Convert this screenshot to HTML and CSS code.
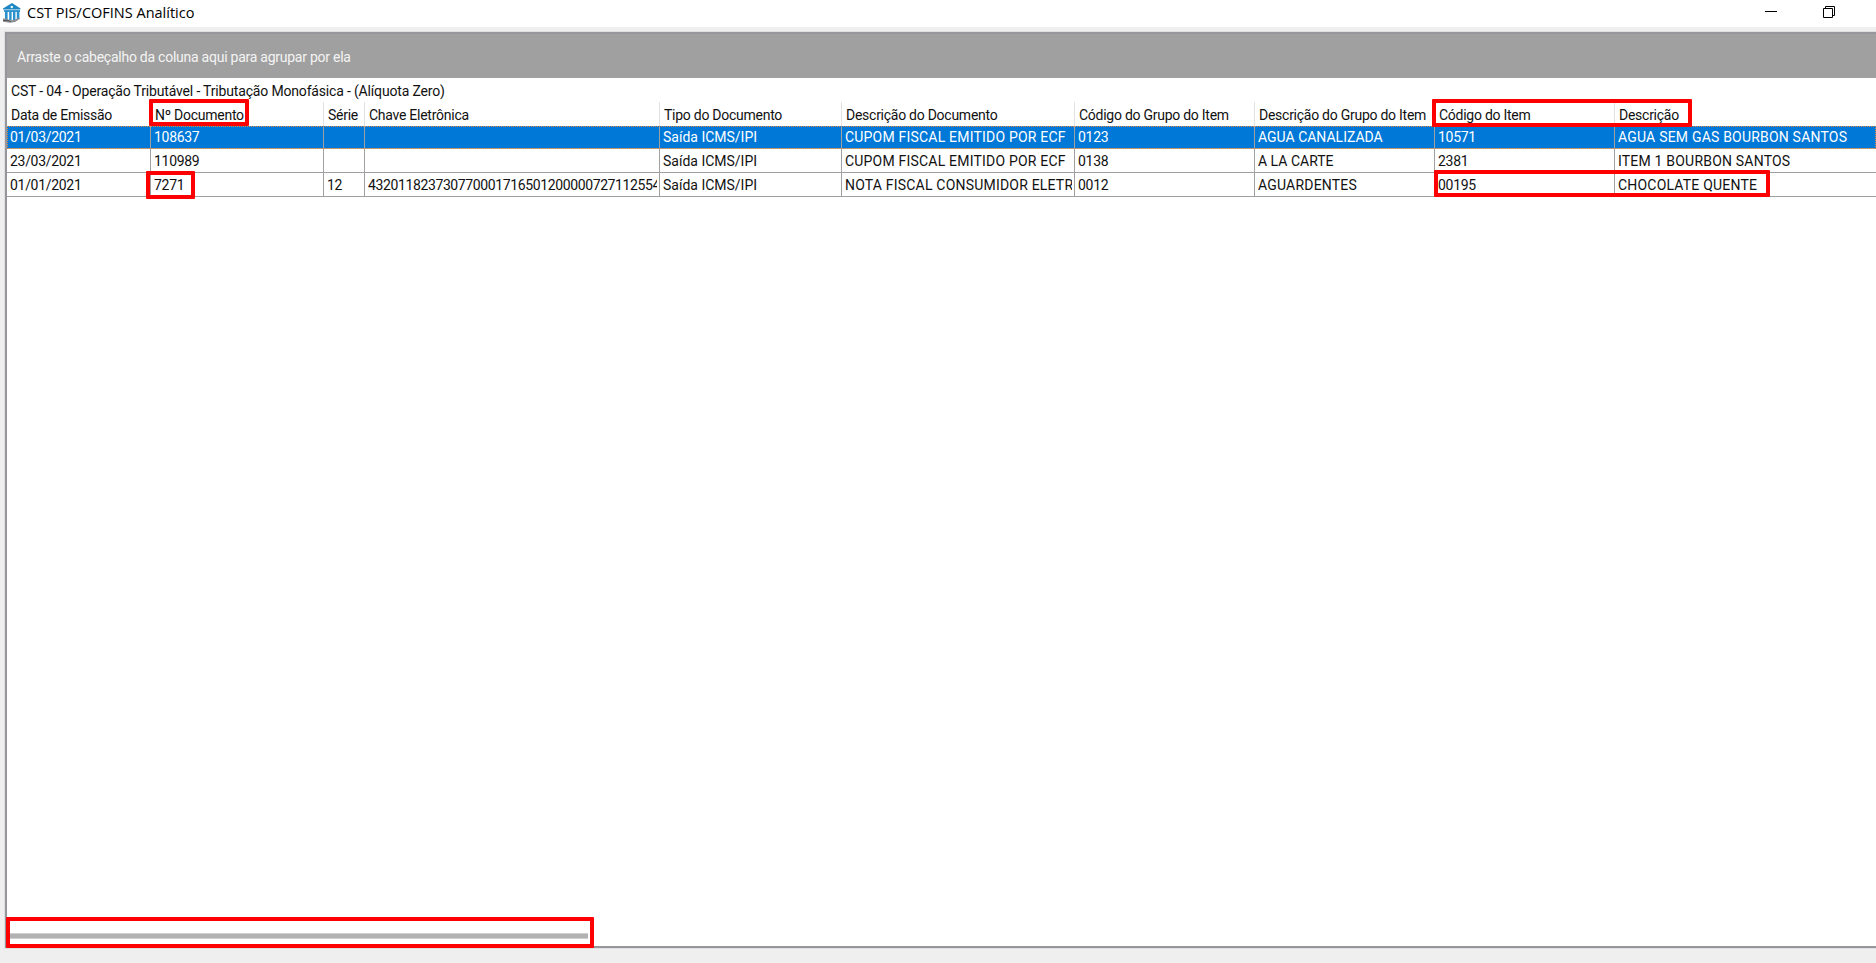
FILE: index.html
```html
<!DOCTYPE html>
<html lang="pt-BR">
<head>
  <meta charset="UTF-8">
  <title>CST PIS/COFINS Analítico</title>
  <link rel="stylesheet" href="styles.css">
</head>
<body>

  <div class="titlebar">
    <svg class="logo" width="20" height="22" viewBox="0 0 20 22">
      <path d="M1 6.5 10 1l8.5 5.5v1H1z" fill="#1c86c2"/>
      <path d="M2 8h16v2H2z" fill="#3d9bd0"/>
      <path d="M3 9h2.6v9H3zM7.2 9h2.4v9H7.2zM11 9h2.4v9H11zM14.8 9h2.6v8h-2.6z" fill="#2a91cc"/>
      <circle cx="9.8" cy="5" r="1.3" fill="#e8f4fa"/>
      <path d="M1 16.5l4 .3 3 1.5 4-.2 5-2.3 1 1-5 3.2-5 .8-7-1z" fill="#8b8d90"/>
      <path d="M1 18.5h5l3 1" fill="none" stroke="#55585c"/>
    </svg>
    <span class="caption">CST PIS/COFINS Analítico</span>
    <div class="controls">
      <svg width="12" height="12" viewBox="0 0 12 12"><path d="M0 5.5h12" stroke="#000"/></svg>
      <svg width="12" height="12" viewBox="0 0 12 12" fill="none" stroke="#000"><path d="M.5 2.5h9v9h-9zM2.5 2.5v-2h9v9h-2"/></svg>
    </div>
  </div>

  <div class="panel">
    <div class="groupbar">Arraste o cabeçalho da coluna aqui para agrupar por ela</div>
    <div class="band"><span>CST - 04 - Operação Tributável - Tributação Monofásica - (Alíquota Zero)</span></div>

    <div class="row head">
      <div>Data de Emissão</div>
      <div>Nº Documento</div>
      <div>Série</div>
      <div>Chave Eletrônica</div>
      <div>Tipo do Documento</div>
      <div>Descrição do Documento</div>
      <div>Código do Grupo do Item</div>
      <div>Descrição do Grupo do Item</div>
      <div>Código do Item</div>
      <div>Descrição</div>
    </div>
    <div class="row selected">
      <div class="num">01/03/2021</div>
      <div class="num">108637</div>
      <div></div>
      <div></div>
      <div class="kind">Saída ICMS/IPI</div>
      <div>CUPOM FISCAL EMITIDO POR ECF</div>
      <div class="num">0123</div>
      <div class="group">AGUA CANALIZADA</div>
      <div class="num">10571</div>
      <div>AGUA SEM GAS BOURBON SANTOS</div>
    </div>
    <div class="row">
      <div class="num">23/03/2021</div>
      <div class="num">110989</div>
      <div></div>
      <div></div>
      <div class="kind">Saída ICMS/IPI</div>
      <div>CUPOM FISCAL EMITIDO POR ECF</div>
      <div class="num">0138</div>
      <div class="group">A LA CARTE</div>
      <div class="num">2381</div>
      <div>ITEM 1 BOURBON SANTOS</div>
    </div>
    <div class="row">
      <div class="num">01/01/2021</div>
      <div class="num">7271</div>
      <div class="num">12</div>
      <div class="num key">432011823730770001716501200000727112554</div>
      <div class="kind">Saída ICMS/IPI</div>
      <div>NOTA FISCAL CONSUMIDOR ELETR</div>
      <div class="num">0012</div>
      <div>AGUARDENTES</div>
      <div class="num">00195</div>
      <div>CHOCOLATE QUENTE</div>
    </div>

    <div class="scroll"><div class="thumb"></div></div>
  </div>

  <!-- marcações -->
  <div class="mark mark-doc"></div>
  <div class="mark mark-num"></div>
  <div class="mark mark-item"></div>
  <div class="mark mark-value"></div>
  <div class="mark mark-scroll"></div>

</body>
</html>
```

FILE: styles.css
```css
* { box-sizing: border-box; }

body {
  margin: 0;
  height: 963px;
  overflow: hidden;
  background: #efefef;
  font-family: Roboto, "Liberation Sans", sans-serif;
  font-size: 14px;
  color: #111;
  display: flex;
  flex-direction: column;
}

.titlebar {
  height: 27px;
  flex: none;
  display: flex;
  background: #fff;
}

.logo {
  margin: 2px 5px 0 2px;
}

.caption {
  font-family: "Open Sans", "Noto Sans", sans-serif;
  font-size: 14.5px;
  line-height: 26px;
  color: #000;
}

.controls {
  margin: 6px 41px 0 auto;
  display: flex;
  gap: 46px;
}

.panel {
  height: 916px;
  flex: none;
  margin: 5px 0 0 5px;
  border: solid #95979c;
  border-width: 2px 0 2px 2px;
  background: #fff;
  display: flex;
  flex-direction: column;
  box-shadow: 0 0 0 1px #dfdfe1;
}

.groupbar {
  height: 44px;
  padding-left: 10px;
  background: #a0a0a0;
  color: #f4f4f4;
  line-height: 47px;
  letter-spacing: -.25px;
}

.band {
  height: 24px;
  padding-left: 4px;
  line-height: 27px;
  letter-spacing: -.17px;
  white-space: nowrap;
}

.row {
  height: 24px;
  display: grid;
  grid-template-columns: 144px 173px 41px 295px 182px 233px 180px 180px 180px 1fr;
  border-bottom: 1px solid #a0a0a0;
}

.row > div {
  padding: 0 2px 0 3px;
  border-right: 1px solid #a0a0a0;
  line-height: 24px;
  letter-spacing: .2px;
  white-space: nowrap;
  overflow: clip;
  overflow-clip-margin: content-box;
}

.row > div:last-child {
  border-right: 0;
}

.head {
  border-bottom: 0;
}

.row.head > div {
  padding-left: 4px;
  border-color: #e2e2e2;
  line-height: 26px;
  letter-spacing: -.26px;
}

.selected {
  height: 23px;
  background: #0078d7;
  color: #fff;
  outline: 1px dotted #d88a45;
  outline-offset: -1px;
}

.row.selected > div {
  line-height: 22px;
}

.row > .num {
  letter-spacing: -.3px;
}

.row > .key {
  letter-spacing: -.38px;
}

.row > .kind {
  letter-spacing: 0;
}

.row > .group {
  letter-spacing: 0;
}

.scroll {
  margin: auto 0 7px 2px;
}

.thumb {
  width: 579px;
  height: 6px;
  background: #b2b2b2;
  border: solid #d0d0d0;
  border-width: 1px 0;
}

.mark {
  position: absolute;
  border: 4px solid #fe0000;
  border-radius: 1px;
}

.mark-doc { left: 149px; top: 99px; width: 100px; height: 27px; }
.mark-num { left: 146px; top: 171px; width: 49px; height: 28px; }
.mark-item { left: 1432px; top: 99px; width: 260px; height: 28px; }
.mark-value { left: 1434px; top: 170px; width: 336px; height: 27px; }
.mark-scroll { left: 6px; top: 917px; width: 588px; height: 31px; }
```
